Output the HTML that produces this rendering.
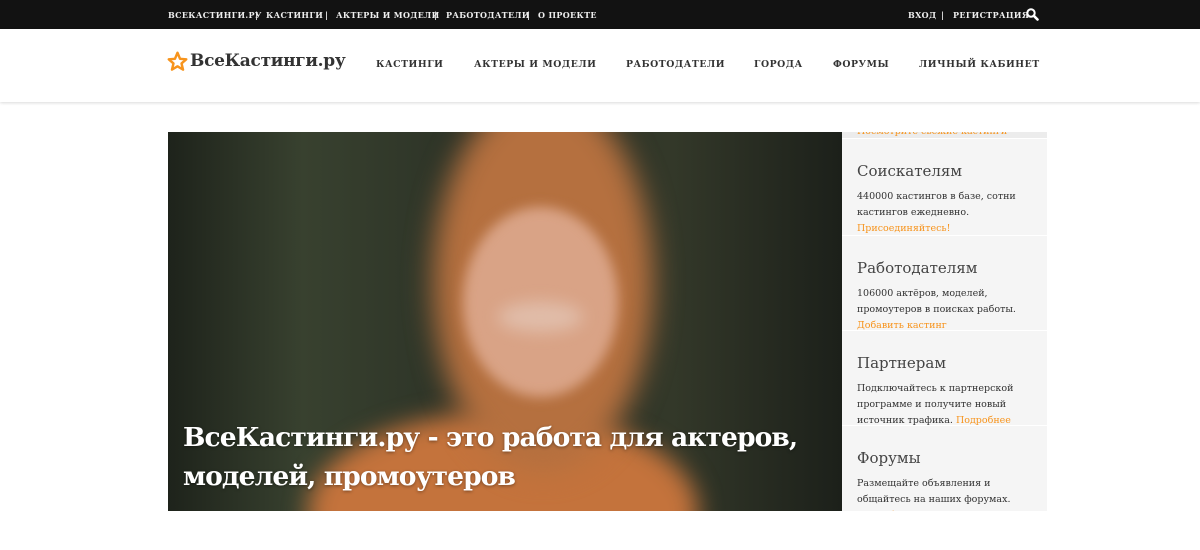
<!DOCTYPE html>
<html><head><meta charset="utf-8"><style>
*{margin:0;padding:0;box-sizing:border-box}
html,body{overflow:hidden}
body{width:1200px;height:550px;background:#fff;font-family:"DejaVu Serif","Liberation Serif",serif;position:relative;color:#333}
.top{position:absolute;left:0;top:0;width:1200px;height:29px;background:#121212;color:#eee;font-size:8px;font-weight:bold;letter-spacing:.35px}
.top span{position:absolute;top:10px;white-space:nowrap}
.hdr{position:absolute;top:29px;left:0;width:1200px;height:73px;background:#fff;box-shadow:0 1px 3px rgba(0,0,0,.15)}
.logo{position:absolute;left:190px;top:22px;font-size:17px;font-weight:bold;color:#333;letter-spacing:-.3px}
.nav{position:absolute;top:30px;font-size:9.3px;font-weight:bold;letter-spacing:.55px;color:#333;white-space:nowrap}
.photo{position:absolute;left:168px;top:132px;width:674px;height:379px;overflow:hidden;background:linear-gradient(90deg,#1e231b 0%,#38412f 20%,#2c3226 45%,#333829 75%,#1c201a 100%)}
.photo div{position:absolute;border-radius:50%}
.photo h1{position:absolute;left:15px;top:286px;font-size:26.5px;line-height:39px;color:#fff;font-weight:bold;letter-spacing:-.9px;white-space:nowrap;text-shadow:0 1px 3px rgba(0,0,0,.4)}
.side{position:absolute;left:842px;top:132px;width:205px;height:379px;background:#f5f5f5;overflow:hidden}
.blk{position:absolute;left:0;width:205px;padding-left:15px;border-top:1px solid #fff}
.blk h3{font-size:15px;font-weight:normal;color:#444;margin-top:23px;margin-bottom:9px}
.blk p{font-size:9.5px;line-height:16px;color:#333}
.o{color:#f7941d}
</style></head><body>
<div class="top">
<span style="left:168px">ВСЕКАСТИНГИ.РУ</span><span style="left:255px">|</span>
<span style="left:266px">КАСТИНГИ</span><span style="left:325px">|</span>
<span style="left:336px">АКТЕРЫ И МОДЕЛИ</span><span style="left:434px">|</span>
<span style="left:446px">РАБОТОДАТЕЛИ</span><span style="left:527px">|</span>
<span style="left:538px">О ПРОЕКТЕ</span>
<span style="left:908px">ВХОД</span><span style="left:941px">|</span>
<span style="left:953px">РЕГИСТРАЦИЯ</span>
<svg style="position:absolute;left:1026px;top:8px" width="13" height="13" viewBox="0 0 13 13"><circle cx="5" cy="5" r="3.7" stroke="#fff" stroke-width="2" fill="none"/><path d="M7.8 7.8L11.5 11.5" stroke="#fff" stroke-width="2.6" stroke-linecap="round"/></svg>
</div>
<div class="hdr">
<svg style="position:absolute;left:167px;top:22px" width="21" height="21" viewBox="0 0 24 24"><path d="M12 2l2.9 6.9 7.1.6-5.4 4.7 1.7 7.1L12 17.5l-6.3 3.8 1.7-7.1L2 9.5l7.1-.6z" fill="none" stroke="#f7941d" stroke-width="2.8" stroke-linejoin="round"/></svg>
<div class="logo">ВсеКастинги.ру</div>
<div class="nav" style="left:376px">КАСТИНГИ</div>
<div class="nav" style="left:474px">АКТЕРЫ И МОДЕЛИ</div>
<div class="nav" style="left:626px">РАБОТОДАТЕЛИ</div>
<div class="nav" style="left:754px">ГОРОДА</div>
<div class="nav" style="left:833px">ФОРУМЫ</div>
<div class="nav" style="left:919px">ЛИЧНЫЙ КАБИНЕТ</div>
</div>
<div class="photo">
<div style="left:140px;top:280px;width:390px;height:200px;background:#c4733c;filter:blur(12px)"></div>
<div style="left:265px;top:-40px;width:220px;height:380px;background:#b5703f;filter:blur(14px)"></div>
<div style="left:295px;top:75px;width:155px;height:190px;background:#d9a386;filter:blur(6px)"></div>
<div style="left:330px;top:170px;width:85px;height:30px;background:#e8d6cc;filter:blur(8px);opacity:.5"></div>
<h1>ВсеКастинги.ру - это работа для актеров,<br>моделей, промоутеров</h1></div>
<div class="side">
<div style="position:absolute;left:0;top:0;width:205px;height:6px;background:#ececec"></div>
<div style="position:absolute;left:15px;top:-6px;font-size:9.5px" class="o">Посмотрите свежие кастинги</div>
<div class="blk" style="top:6px"><h3>Соискателям</h3><p>440000 кастингов в базе, сотни кастингов ежедневно.<br><span class="o">Присоединяйтесь!</span></p></div>
<div class="blk" style="top:103px"><h3>Работодателям</h3><p>106000 актёров, моделей, промоутеров в поисках работы.<br><span class="o">Добавить кастинг</span></p></div>
<div class="blk" style="top:198px"><h3>Партнерам</h3><p>Подключайтесь к партнерской программе и получите новый источник трафика. <span class="o">Подробнее</span></p></div>
<div class="blk" style="top:293px"><h3>Форумы</h3><p>Размещайте объявления и общайтесь на наших форумах.<br><span class="o">Подробнее о форумах</span></p></div>
</div>
</body></html>
